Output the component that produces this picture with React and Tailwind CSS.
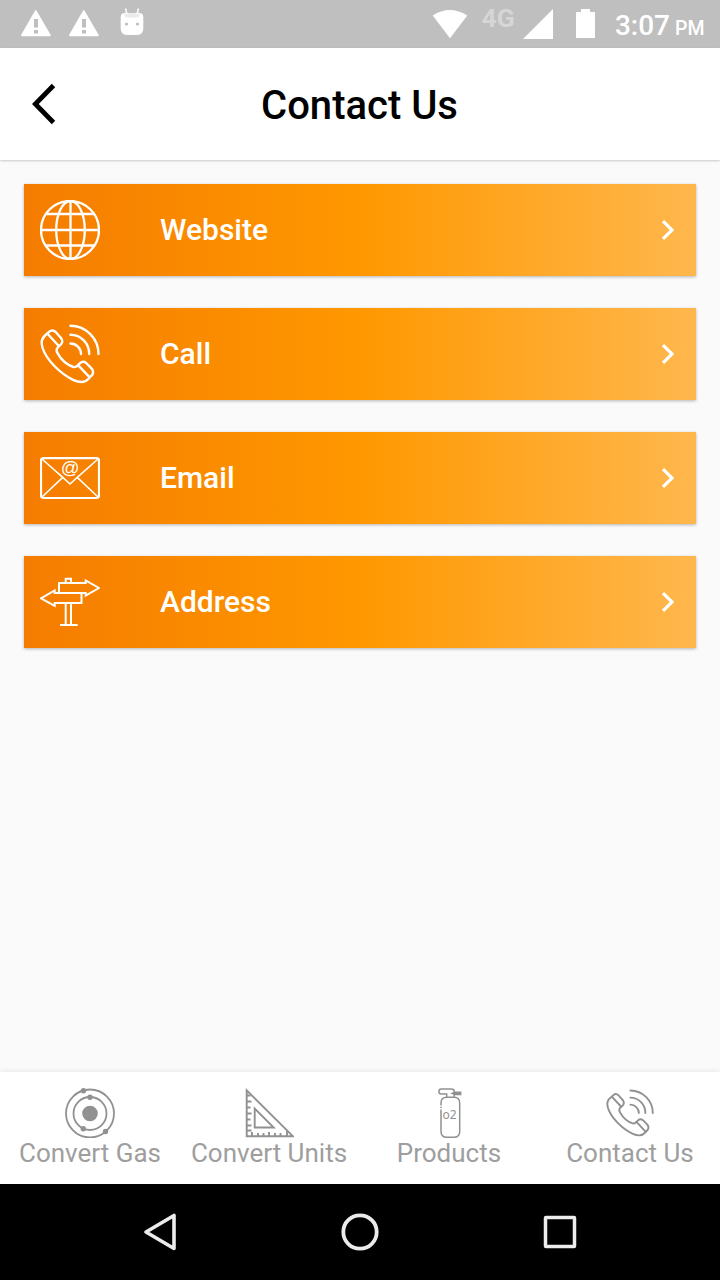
import React from "react";

function GlobeIcon() {
  return (
    <svg width="60" height="60" viewBox="0 0 60 60" fill="none" stroke="#fff" strokeWidth="2.3">
      <circle cx="30" cy="30" r="29" />
      <ellipse cx="30.5" cy="30" rx="14.3" ry="29" />
      <path d="M30.5 1v58M1 30h58M6 14h48M6 45.5h48" />
    </svg>
  );
}

function PhoneIcon({ size = 60 }) {
  return (
    <svg
      width={size}
      height={size}
      viewBox="0 0 60 60"
      fill="none"
      stroke="currentColor"
      strokeWidth="2.4"
      strokeLinecap="round"
      strokeLinejoin="round"
    >
      <path d="M7.3 9.5L9.3 7.6Q12.5 5 15.7 8L21 14Q23.5 17.3 21.2 20.2L18.5 22.6Q15.3 25.5 17.5 29.2C21 35.5 27 41 33.5 43Q36 43.5 38 41.2L40 39.2Q43 36.5 46.2 39L51.7 44.6Q54.3 48 52 51.2L48.3 55C45 58.7 40 59 33 55.8C20 49.5 6.5 36 2.6 24C.8 18 1.2 14 7.3 9.5Z" />
      <path d="M7.3 9.5L19 22.2M38 41.2L49.5 53.2" />
      <path d="M30.5 1.8A28.2 28.2 0 0 1 58.5 30M30.5 10.8A18.7 19 0 0 1 49.2 30M30.5 19.5A10.5 10.5 0 0 1 41 30" />
    </svg>
  );
}

function EmailIcon() {
  return (
    <svg width="60" height="60" viewBox="0 0 60 60" fill="none" stroke="#fff">
      <rect x="1" y="10.2" width="58" height="39.8" rx="2.5" strokeWidth="2.2" />
      <path d="M2 11L23 29.7L30 36L37 29.7L58 11M2 49L22.5 29.7M58 49L37.5 29.7" strokeWidth="1.6" />
      <text
        x="30.2"
        y="26"
        textAnchor="middle"
        fill="#fff"
        stroke="none"
        className="font-['Liberation_Sans',sans-serif] text-[18.5px]"
      >
        @
      </text>
    </svg>
  );
}

function SignIcon() {
  return (
    <svg width="60" height="60" viewBox="0 0 60 60" fill="none" stroke="#fff" strokeWidth="2">
      <path d="M25.7 10.7V6.7H31V10.7" />
      <path d="M19 11H45.7V8.5L59 16L45.7 23.5V21H19Z" />
      <path d="M41.5 21V31H14.7V33.8L1 26.3L14.7 18.5V21H41.5" />
      <path d="M25.7 31V53M31 31V53M20 53H37.7" />
    </svg>
  );
}

function AtomIcon() {
  return (
    <svg width="50" height="50" viewBox="0 0 50 50" fill="none" stroke="#919191" strokeWidth="1.8">
      <circle cx="25" cy="25.5" r="24" />
      <circle cx="25" cy="25.5" r="16.5" />
      <g fill="#919191" stroke="none">
        <circle cx="25" cy="25.5" r="7.8" />
        <circle cx="18.5" cy="2.8" r="2.7" />
        <circle cx="25" cy="9.2" r="2.7" />
        <circle cx="18.3" cy="40.8" r="2.7" />
        <circle cx="40.5" cy="43.5" r="2.7" />
      </g>
    </svg>
  );
}

function RulerIcon() {
  return (
    <svg width="50" height="50" viewBox="0 0 50 50" fill="none" stroke="#919191" strokeWidth="1.9">
      <path d="M2.7 2.3V48.3H49Z" />
      <path d="M10.7 20.5V39.5H29.7Z" />
      <path d="M3 7.5h3.5M3 13.5h4.5M3 19.5h3.5M3 25.5h4.5M3 31.5h3.5M3 37.5h4.5M3 42.5h4.5" />
      <path d="M8 48.5v-4.5M14 48.5v-3.5M19.5 48.5v-3.5M25 48.5v-4.5M31 48.5v-3.5M36.5 48.5v-3.5M43 48.5v-5.5" />
    </svg>
  );
}

function TankIcon() {
  return (
    <svg width="50" height="50" viewBox="0 0 50 50" fill="none" stroke="#919191" strokeWidth="1.5">
      <g transform="translate(.7 0)">
        <path d="M16.3 17.5V15Q16.3 9.2 22 9.2H29.5Q35 9.2 35 15V43.5Q35 49.3 29 49.3H22.3Q16.3 49.3 16.3 43.5V21.5" />
        <path d="M16.3 18.8v1.2" />
        <path d="M22 9.2V6H16.5Q14.2 6 14.2 3.5Q14.2 1 16.5 1H26.5Q29.5 1 29.5 3.5V9.2" />
        <path d="M27.5 5.5L30 4.2H36V6.5H30Z" fill="#919191" />
      </g>
      <text
        x="25.5"
        y="31"
        textAnchor="middle"
        fill="#919191"
        stroke="none"
        className="font-['Noto_Sans',sans-serif] text-[12px]"
      >
        o2
      </text>
    </svg>
  );
}

function WarningIcon() {
  return (
    <svg width="32" height="28" viewBox="0 0 32 28">
      <path d="M15.8 2L30 26.5H1.8Z" fill="#fff" stroke="#fff" strokeWidth="1.6" strokeLinejoin="round" />
      <path d="M14 10h4v8.5h-4zM14 21h4v3.5h-4z" fill="#bfbfbf" />
    </svg>
  );
}

function DroidIcon() {
  return (
    <svg width="24" height="28" viewBox="0 0 24 28">
      <path d="M5.5 .5L7 6M18.5 .5L17 6" stroke="#fff" strokeWidth="1.5" />
      <path d="M.7 9Q.7 5 5 5H19Q23.3 5 23.3 9V20Q23.3 27 17 27H7Q.7 27 .7 20Z" fill="#fff" />
      <path d="M4 6.5Q12 3.5 20 6.5L19 9Q12 10.5 5 9Z" fill="#ebebeb" />
      <circle cx="6.5" cy="16" r="1.6" fill="#bfbfbf" />
      <circle cx="17.5" cy="16" r="1.6" fill="#bfbfbf" />
    </svg>
  );
}

function StatusBar() {
  return (
    <div className="flex h-12 shrink-0 items-start bg-[#bfbfbf] text-white">
      <div className="flex gap-4 pt-[9px] pl-5">
        <WarningIcon />
        <WarningIcon />
      </div>
      <div className="pt-2 pl-5">
        <DroidIcon />
      </div>
      <svg className="mt-2 ml-auto" width="36" height="32" viewBox="0 0 36 32">
        <path d="M.7 7.5Q17.5-3.5 35.3 7.5L18 30.3Z" fill="#fff" />
      </svg>
      <span className="mt-1 ml-[13.5px] w-[36.5px] text-[26.5px] leading-7 font-bold text-[#d6d6d6]">4G</span>
      <svg className="mt-2 ml-[5px]" width="30" height="32" viewBox="0 0 30 32">
        <path d="M30 1V31H0Z" fill="#fff" />
      </svg>
      <svg className="mt-2 ml-[23px]" width="19" height="31" viewBox="0 0 19 31">
        <path d="M0 4H5V1H14V4H19V30H0Z" fill="#fff" />
      </svg>
      <div className="flex w-[125px] items-baseline justify-end gap-[5px] pt-[10px] pr-[15.5px] leading-8 font-medium">
        <span className="text-[28px]">3:07</span>
        <span className="text-[19.5px]">PM</span>
      </div>
    </div>
  );
}

const contacts = [
  { label: "Website", icon: <GlobeIcon /> },
  { label: "Call", icon: <PhoneIcon /> },
  { label: "Email", icon: <EmailIcon /> },
  { label: "Address", icon: <SignIcon /> },
];

const tabs = [
  { label: "Convert Gas", icon: <AtomIcon /> },
  { label: "Convert Units", icon: <RulerIcon /> },
  { label: "Products", icon: <TankIcon /> },
  { label: "Contact Us", icon: <PhoneIcon size={48} /> },
];

function ContactCard({ label, icon }) {
  return (
    <button className="flex h-[92px] items-center bg-linear-to-r/srgb from-[#f57c00] via-[#ff9800] to-[#ffb74d] pr-[21px] pl-4 text-white shadow-[0_1px_3px_rgba(0,0,0,0.28)]">
      {icon}
      <span className="ml-[60px] text-[30px] leading-9 font-medium">{label}</span>
      <svg className="ml-auto" width="14" height="22" viewBox="0 0 14 22">
        <path d="M2 2.2L11 11L2 19.8" fill="none" stroke="#fff" strokeWidth="3.2" />
      </svg>
    </button>
  );
}

function App() {
  return (
    <div className="flex h-[1280px] w-[720px] flex-col overflow-hidden bg-[#fafafa] font-[Roboto,sans-serif]">
      <StatusBar />

      <header className="grid h-28 shrink-0 grid-cols-[100px_1fr_101px] items-center bg-white shadow-[0_1px_2px_rgba(0,0,0,0.2)]">
        <svg className="ml-8" width="26" height="42" viewBox="0 0 26 42">
          <path d="M21.5 2.5L3.3 21L21.5 39.5" fill="none" stroke="#000" strokeWidth="4.8" />
        </svg>
        <h1 className="pt-1 text-center text-[40px] leading-[48px] font-medium text-black">Contact Us</h1>
      </header>

      <main className="flex grow flex-col gap-8 px-6 pt-6">
        {contacts.map((item) => (
          <ContactCard key={item.label} {...item} />
        ))}
      </main>

      <nav className="grid h-28 shrink-0 grid-cols-[180px_178px_182px_180px] bg-white pt-4 shadow-[0_-1px_5px_rgba(0,0,0,0.08)]">
        {tabs.map((tab) => (
          <button key={tab.label} className="flex flex-col items-center text-[#919191]">
            <span className="flex h-[50px] items-center">{tab.icon}</span>
            <span className="text-[26px] leading-[30px] whitespace-nowrap text-[#9e9e9e]">{tab.label}</span>
          </button>
        ))}
      </nav>

      {/* android system buttons */}
      <div className="flex h-24 shrink-0 items-center justify-center gap-40 bg-black">
        <svg width="40" height="40" viewBox="0 0 40 40" fill="none" stroke="#ececec" strokeWidth="3.6">
          <path d="M34 3.5V36.5L6 20Z" strokeLinejoin="round" />
        </svg>
        <svg width="40" height="40" viewBox="0 0 40 40" fill="none" stroke="#ececec" strokeWidth="3.8">
          <circle cx="20" cy="20" r="16.7" />
        </svg>
        <svg width="40" height="40" viewBox="0 0 40 40" fill="none" stroke="#ececec" strokeWidth="3.5">
          <rect x="5.5" y="5.5" width="29" height="29" rx=".5" />
        </svg>
      </div>
    </div>
  );
}

export default App;
